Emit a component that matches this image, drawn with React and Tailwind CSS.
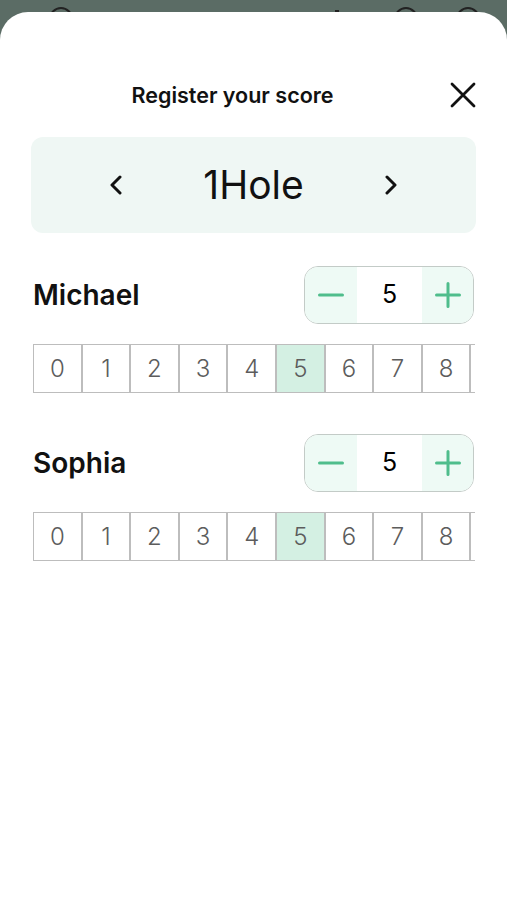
import { useState } from "react";

const players = [
  { name: "Michael", score: 5 },
  { name: "Sophia", score: 5 },
];

const digits = [0, 1, 2, 3, 4, 5, 6, 7, 8];

function Stepper({ value, onChange }) {
  return (
    <div className="flex h-[58px] w-[170px] overflow-hidden rounded-[14px] border-[1.5px] border-[#c3cbc7]">
      <button
        onClick={() => onChange(Math.max(0, value - 1))}
        className="flex w-[52px] items-center justify-center bg-[#eefaf5]"
      >
        <svg width="26" height="4" viewBox="0 0 26 4">
          <path d="M1.5 2H24.5" stroke="#4fbd8c" strokeWidth="3" strokeLinecap="round" />
        </svg>
      </button>
      <div className="flex flex-1 items-center justify-center bg-white text-[25px] text-black">
        {value}
      </div>
      <button
        onClick={() => onChange(value + 1)}
        className="flex w-[51px] items-center justify-center bg-[#eefaf5]"
      >
        <svg width="26" height="26" viewBox="0 0 26 26">
          <path d="M1.5 13H24.5M13 1.5V24.5" stroke="#4fbd8c" strokeWidth="3" strokeLinecap="round" />
        </svg>
      </button>
    </div>
  );
}

function PlayerRow({ player, onChange, first }) {
  return (
    <div className={`px-[2px] ${first ? "mt-[33px]" : "mt-[41px]"}`}>
      <div className="flex h-[58px] items-center justify-between">
        <span className="text-[28px] font-semibold text-[#111]">{player.name}</span>
        <Stepper value={player.score} onChange={onChange} />
      </div>
      <div className="mt-[20px] flex w-[442px] overflow-hidden">
        {digits.map((d) => (
          <button
            key={d}
            onClick={() => onChange(d)}
            className={`flex h-[49px] w-[48.6px] shrink-0 items-center justify-center border border-[#bdbdbd] text-[24px] font-light text-[#5c5c5c] ${
              d === player.score ? "bg-[#d4f0e3]" : "bg-white"
            }`}
          >
            {d}
          </button>
        ))}
        <div className="h-[49px] w-[48.6px] shrink-0 border border-[#bdbdbd]" />
      </div>
    </div>
  );
}

export default function App() {
  const [hole, setHole] = useState(1);
  const [scores, setScores] = useState(players);

  const setScore = (idx, value) =>
    setScores((prev) => prev.map((p, i) => (i === idx ? { ...p, score: value } : p)));

  return (
    <div className="flex min-h-[900px] flex-col bg-[#5b6c65] font-['Inter',sans-serif]">
      {/* status bar peeking above the sheet */}
      <div className="flex h-3 items-start overflow-hidden pt-[7px]">
        <div className="ml-[49px] h-6 w-6 rounded-full border-2 border-[#222]" />
        <div className="ml-[262px] mt-[3px] h-2 w-[4px] bg-[#222]" />
        <div className="ml-[55px] h-6 w-6 rounded-full border-2 border-[#222]" />
        <div className="ml-[38px] h-6 w-6 rounded-full border-2 border-[#222]" />
      </div>

      <div className="flex-1 rounded-t-[28px] bg-white px-[31px] pt-[71px]">
        {/* Header */}
        <div className="flex h-6 items-center">
          <h1 className="flex-1 text-center text-[21.5px] font-semibold text-[#111]">
            Register your score
          </h1>
          <div className="flex w-[42px] justify-end">
            <svg width="26" height="26" viewBox="0 0 26 26">
              <path d="M2 2L24 24M24 2L2 24" stroke="#111" strokeWidth="2.8" strokeLinecap="round" />
            </svg>
          </div>
        </div>

        {/* Hole selector */}
        <div className="mt-[30px] flex h-[96px] items-center justify-center gap-[80px] rounded-[12px] bg-[#eff7f4]">
          <button onClick={() => setHole(Math.max(1, hole - 1))}>
            <svg width="14" height="20" viewBox="0 0 14 20">
              <path d="M11 2L3 10L11 18" fill="none" stroke="#111" strokeWidth="3" strokeLinecap="round" strokeLinejoin="round" />
            </svg>
          </button>
          <span className="text-[39px] text-[#111]">{hole}Hole</span>
          <button onClick={() => setHole(hole + 1)}>
            <svg width="14" height="20" viewBox="0 0 14 20">
              <path d="M3 2L11 10L3 18" fill="none" stroke="#111" strokeWidth="3" strokeLinecap="round" strokeLinejoin="round" />
            </svg>
          </button>
        </div>

        {scores.map((p, idx) => (
          <PlayerRow
            key={p.name}
            player={p}
            first={idx === 0}
            onChange={(v) => setScore(idx, v)}
          />
        ))}
      </div>
    </div>
  );
}
